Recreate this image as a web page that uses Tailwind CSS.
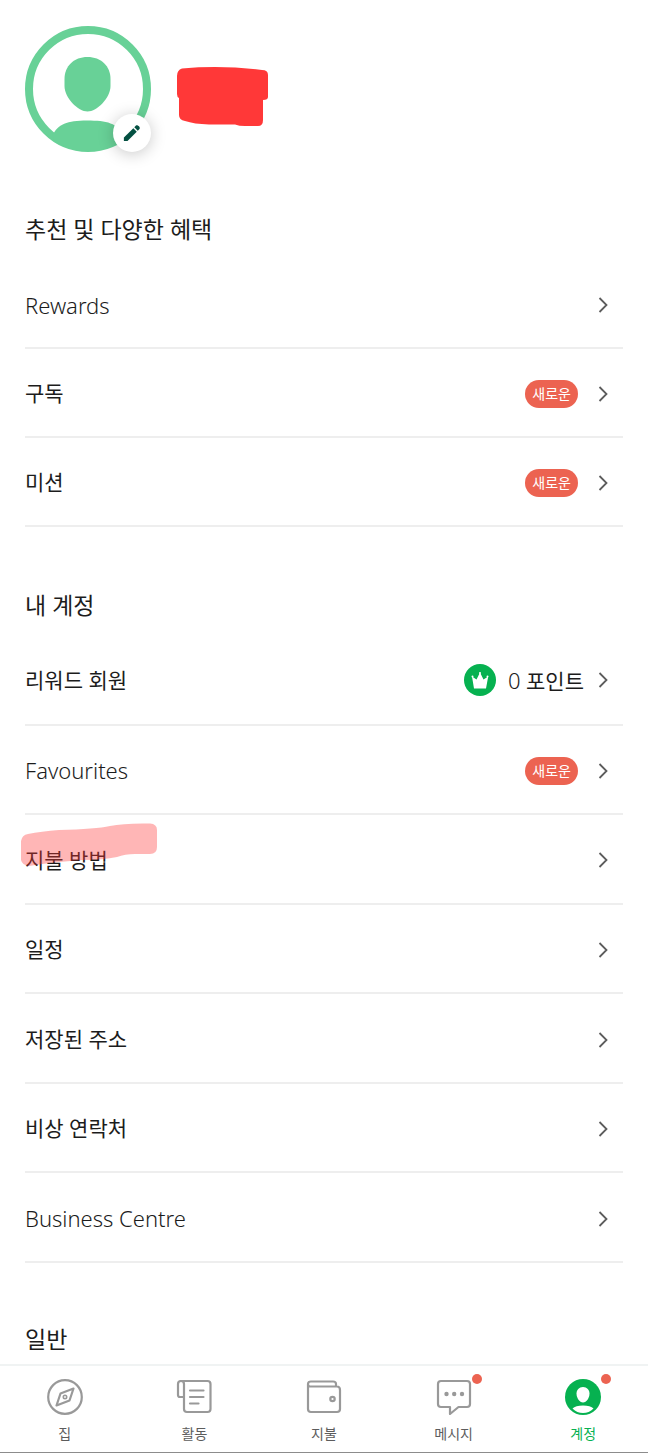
<!DOCTYPE html>
<html lang="ko">
<head>
    <meta charset="UTF-8">
    <meta name="viewport" content="width=device-width, initial-scale=1.0">
    <title>계정</title>
    <script src="https://cdn.jsdelivr.net/npm/@tailwindcss/browser@4"></script>
</head>
<body class="bg-white text-[#1c1c1c] min-h-screen flex flex-col font-['Noto_Sans','Noto_Sans_CJK_KR',sans-serif]">
    <!-- shared icons -->
    <svg class="hidden">
        <symbol id="chevron" viewBox="0 0 10 16">
            <path d="M1.5 1l7 7-7 7" fill="none" stroke="#5c5c5c" stroke-width="1.8"/>
        </symbol>
    </svg>

    <header class="flex items-start gap-6 px-[25px] pt-[26px]">
        <div class="relative">
            <svg class="w-[126px] h-[126px]" viewBox="0 0 126 126" role="img" aria-label="프로필 사진">
                <defs><clipPath id="ring"><circle cx="63" cy="63" r="62"/></clipPath></defs>
                <circle cx="63" cy="63" r="59" fill="none" stroke="#68d197" stroke-width="8"/>
                <path d="M39.500 53C39.500 40 49 31 62.500 31S85.500 40 85.500 53V60C85.500 72 72 85.500 62.500 85.500S39.500 72 39.500 60Z" fill="#68d197"/>
                <path d="M27 110C33 98 42 94.500 62 94.500S92 97 100 110L90 126H36Z" fill="#68d197" clip-path="url(#ring)"/>
            </svg>
            <button type="button" aria-label="프로필 수정" class="absolute right-0 bottom-0 w-[38px] h-[38px] rounded-full bg-white shadow-[0_2px_16px_rgba(0,0,0,0.22)] flex items-center justify-center">
                <svg class="w-[18px] h-[18px]" viewBox="0 0 20 20" fill="#045041">
                    <path d="M1 19v-4L11.500 4.700l3.800 3.800L5 19z"/>
                    <path d="M12.600 3.600l1.800-1.900c1.600-1.500 5.400 1.900 3.900 3.900l-1.900 1.800z"/>
                </svg>
            </button>
        </div>
        <svg class="w-[94px] h-[62px] mt-[39px]" viewBox="0 0 94 62">
            <path d="M7 3.500Q47 0 87 5Q93 5 93 10V32Q93 35 88 35V55Q88 61 83 61H70Q64 61 60 59.500H34Q19 59 10 56Q4 55 4 50V33Q2 32 2 29V11Q2 5 7 3.500Z" fill="#ff3838"/>
        </svg>
    </header>

    <main class="px-[25px] pt-[59px]">
        <h2 class="text-[23px] h-[49px] flex items-start leading-[36px]">추천 및 다양한 혜택</h2>
        <ul class="grid auto-rows-fr min-h-[267px] text-[21px]">
            <li class="border-b-2 border-[#eeeeee]">
                <a href="#" class="h-full flex items-center pt-[3px] pr-[15px]">
                    <span class="flex-1 font-light text-[22px]">Rewards</span>
                    <svg class="w-[10px] h-4"><use href="#chevron"/></svg>
                </a>
            </li>
            <li class="border-b-2 border-[#eeeeee]">
                <a href="#" class="h-full flex items-center gap-5 pt-[3px] pr-[15px]">
                    <span class="flex-1">구독</span>
                    <span class="bg-[#ec6351] text-white text-sm leading-7 rounded-full px-[7px]">새로운</span>
                    <svg class="w-[10px] h-4"><use href="#chevron"/></svg>
                </a>
            </li>
            <li class="border-b-2 border-[#eeeeee]">
                <a href="#" class="h-full flex items-center gap-5 pt-[3px] pr-[15px]">
                    <span class="flex-1">미션</span>
                    <span class="bg-[#ec6351] text-white text-sm leading-7 rounded-full px-[7px]">새로운</span>
                    <svg class="w-[10px] h-4"><use href="#chevron"/></svg>
                </a>
            </li>
        </ul>

        <h2 class="text-[23px] h-[49px] flex items-start leading-[36px] mt-[60px]">내 계정</h2>
        <ul class="grid auto-rows-fr min-h-[627px] text-[21px]">
            <li class="border-b-2 border-[#eeeeee]">
                <a href="#" class="h-full flex items-center pt-px pr-[15px]">
                    <span class="flex-1">리워드 회원</span>
                    <svg class="w-8 h-8 mr-3" viewBox="0 0 32 32">
                        <circle cx="16" cy="16" r="16" fill="#06b150"/>
                        <path d="M8 12.500l4.500 3L16 8.500l3.500 7 4.700-3-2.200 12H10z" fill="#fff"/>
                        <circle cx="8.500" cy="12.500" r="1" fill="#fff"/>
                        <circle cx="16" cy="9" r="1" fill="#fff"/>
                        <circle cx="23.500" cy="12.500" r="1" fill="#fff"/>
                    </svg>
                    <span class="mr-[14px]"><span class="font-light text-[22px]">0</span> 포인트</span>
                    <svg class="w-[10px] h-4"><use href="#chevron"/></svg>
                </a>
            </li>
            <li class="border-b-2 border-[#eeeeee]">
                <a href="#" class="h-full flex items-center gap-5 pt-[3px] pr-[15px]">
                    <span class="flex-1 font-light text-[22px]">Favourites</span>
                    <span class="bg-[#ec6351] text-white text-sm leading-7 rounded-full px-[7px]">새로운</span>
                    <svg class="w-[10px] h-4"><use href="#chevron"/></svg>
                </a>
            </li>
            <li class="border-b-2 border-[#eeeeee] relative">
                <a href="#" class="h-full flex items-center pt-[3px] pr-[15px]">
                    <span class="flex-1">지불 방법</span>
                    <svg class="w-[10px] h-4"><use href="#chevron"/></svg>
                </a>
                <!-- highlighter stroke -->
                <svg class="absolute -left-1 top-2 w-[136px] h-[44px] pointer-events-none" viewBox="0 0 136 44">
                    <path d="M7 11Q20 8.500 38 7Q75 6 89 3Q103 0 129 0.500Q136 1 136 7V24Q136 31 129 31H114Q104 31 96 34Q82 37 62 37Q30 39 8 43Q1 42 0 37V18Q1 12 7 11Z" fill="#ff3838" fill-opacity="0.37"/>
                </svg>
            </li>
            <li class="border-b-2 border-[#eeeeee]">
                <a href="#" class="h-full flex items-center pt-[3px] pr-[15px]">
                    <span class="flex-1">일정</span>
                    <svg class="w-[10px] h-4"><use href="#chevron"/></svg>
                </a>
            </li>
            <li class="border-b-2 border-[#eeeeee]">
                <a href="#" class="h-full flex items-center pt-[3px] pr-[15px]">
                    <span class="flex-1">저장된 주소</span>
                    <svg class="w-[10px] h-4"><use href="#chevron"/></svg>
                </a>
            </li>
            <li class="border-b-2 border-[#eeeeee]">
                <a href="#" class="h-full flex items-center pt-[3px] pr-[15px]">
                    <span class="flex-1">비상 연락처</span>
                    <svg class="w-[10px] h-4"><use href="#chevron"/></svg>
                </a>
            </li>
            <li class="border-b-2 border-[#eeeeee]">
                <a href="#" class="h-full flex items-center pt-[3px] pr-[15px]">
                    <span class="flex-1 font-light text-[22px]">Business Centre</span>
                    <svg class="w-[10px] h-4"><use href="#chevron"/></svg>
                </a>
            </li>
        </ul>

        <h2 class="text-[23px] leading-[36px] mt-[58px]">일반</h2>
    </main>

    <nav class="sticky bottom-0 mt-auto bg-white border-t-2 border-t-[#f0f3f3] border-b border-b-[#8c8c8c] grid grid-cols-5 text-sm text-[#5c5c5c]">
        <a href="#" class="flex flex-col items-center gap-[5px] pt-[13px] pb-1">
            <svg class="w-9 h-9" viewBox="0 0 36 36" fill="none" stroke="#999" stroke-width="2.200" stroke-linejoin="round">
                <circle cx="18" cy="18" r="16.800"/>
                <path d="M26.500 9.500L13.500 14.500 9.500 26.500 22.500 21.500z"/>
                <circle cx="18" cy="18" r="1.700" stroke-width="1.600"/>
            </svg>
            <span class="leading-7">집</span>
        </a>
        <a href="#" class="flex flex-col items-center gap-[5px] pt-[13px] pb-1">
            <svg class="w-9 h-9" viewBox="0 0 36 36" fill="none" stroke="#999" stroke-width="2.200" stroke-linecap="round" stroke-linejoin="round">
                <path d="M4 2H31.500Q34.500 2 34.500 5V30Q34.500 33 31.500 33H11Q8 33 8 30V5Q8 2 5 2Q2 2 2 5V16Q2 18 4 18H8"/>
                <path d="M14 11.500H27.500M14 18H27.500M14 24.500H22.500"/>
            </svg>
            <span class="leading-7">활동</span>
        </a>
        <a href="#" class="flex flex-col items-center gap-[5px] pt-[13px] pb-1">
            <svg class="w-9 h-9" viewBox="0 0 36 36" fill="none" stroke="#999" stroke-width="2.200" stroke-linejoin="round">
                <path d="M2 5V30Q2 33 5 33H31Q34 33 34 30V11Q34 7.500 31 7.500H4Q2 7.500 2 5Q2 2.500 5 2.500H27Q30 2.500 30 5V7.500"/>
                <circle cx="26.500" cy="20" r="2.200"/>
            </svg>
            <span class="leading-7">지불</span>
        </a>
        <a href="#" class="flex flex-col items-center gap-[5px] pt-[13px] pb-1">
            <span class="relative">
                <svg class="w-9 h-9" viewBox="0 0 36 36" fill="none" stroke="#999" stroke-width="2.200" stroke-linejoin="round">
                    <path d="M5 2H31Q34 2 34 5V25Q34 28 31 28H22.500L14 35V28H5Q2 28 2 25V5Q2 2 5 2Z"/>
                    <g fill="#999" stroke="none"><circle cx="10.500" cy="15" r="2.200"/><circle cx="18.200" cy="15" r="2.200"/><circle cx="26" cy="15" r="2.200"/></g>
                </svg>
                <span class="absolute -top-[5px] -right-[10px] w-[10px] h-[10px] rounded-full bg-[#ec6351]"></span>
            </span>
            <span class="leading-7">메시지</span>
        </a>
        <a href="#" aria-current="page" class="flex flex-col items-center gap-[5px] pt-[13px] pb-1 text-[#06b150]">
            <span class="relative">
                <svg class="w-9 h-9" viewBox="0 0 36 36">
                    <circle cx="18" cy="18" r="18" fill="#06b150"/>
                    <path d="M11.500 14.500C11.500 11 14 8 18 8S24.500 11 24.500 14.500C24.500 19 21.500 23.500 18 23.500S11.500 19 11.500 14.500Z" fill="#fff"/>
                    <path d="M7.500 29.500Q10.500 26.500 18 26.500T28.500 29.500Q24 34 18 34T7.500 29.500Z" fill="#fff"/>
                </svg>
                <span class="absolute -top-[5px] -right-[10px] w-[10px] h-[10px] rounded-full bg-[#ec6351]"></span>
            </span>
            <span class="leading-7">계정</span>
        </a>
    </nav>
</body>
</html>
